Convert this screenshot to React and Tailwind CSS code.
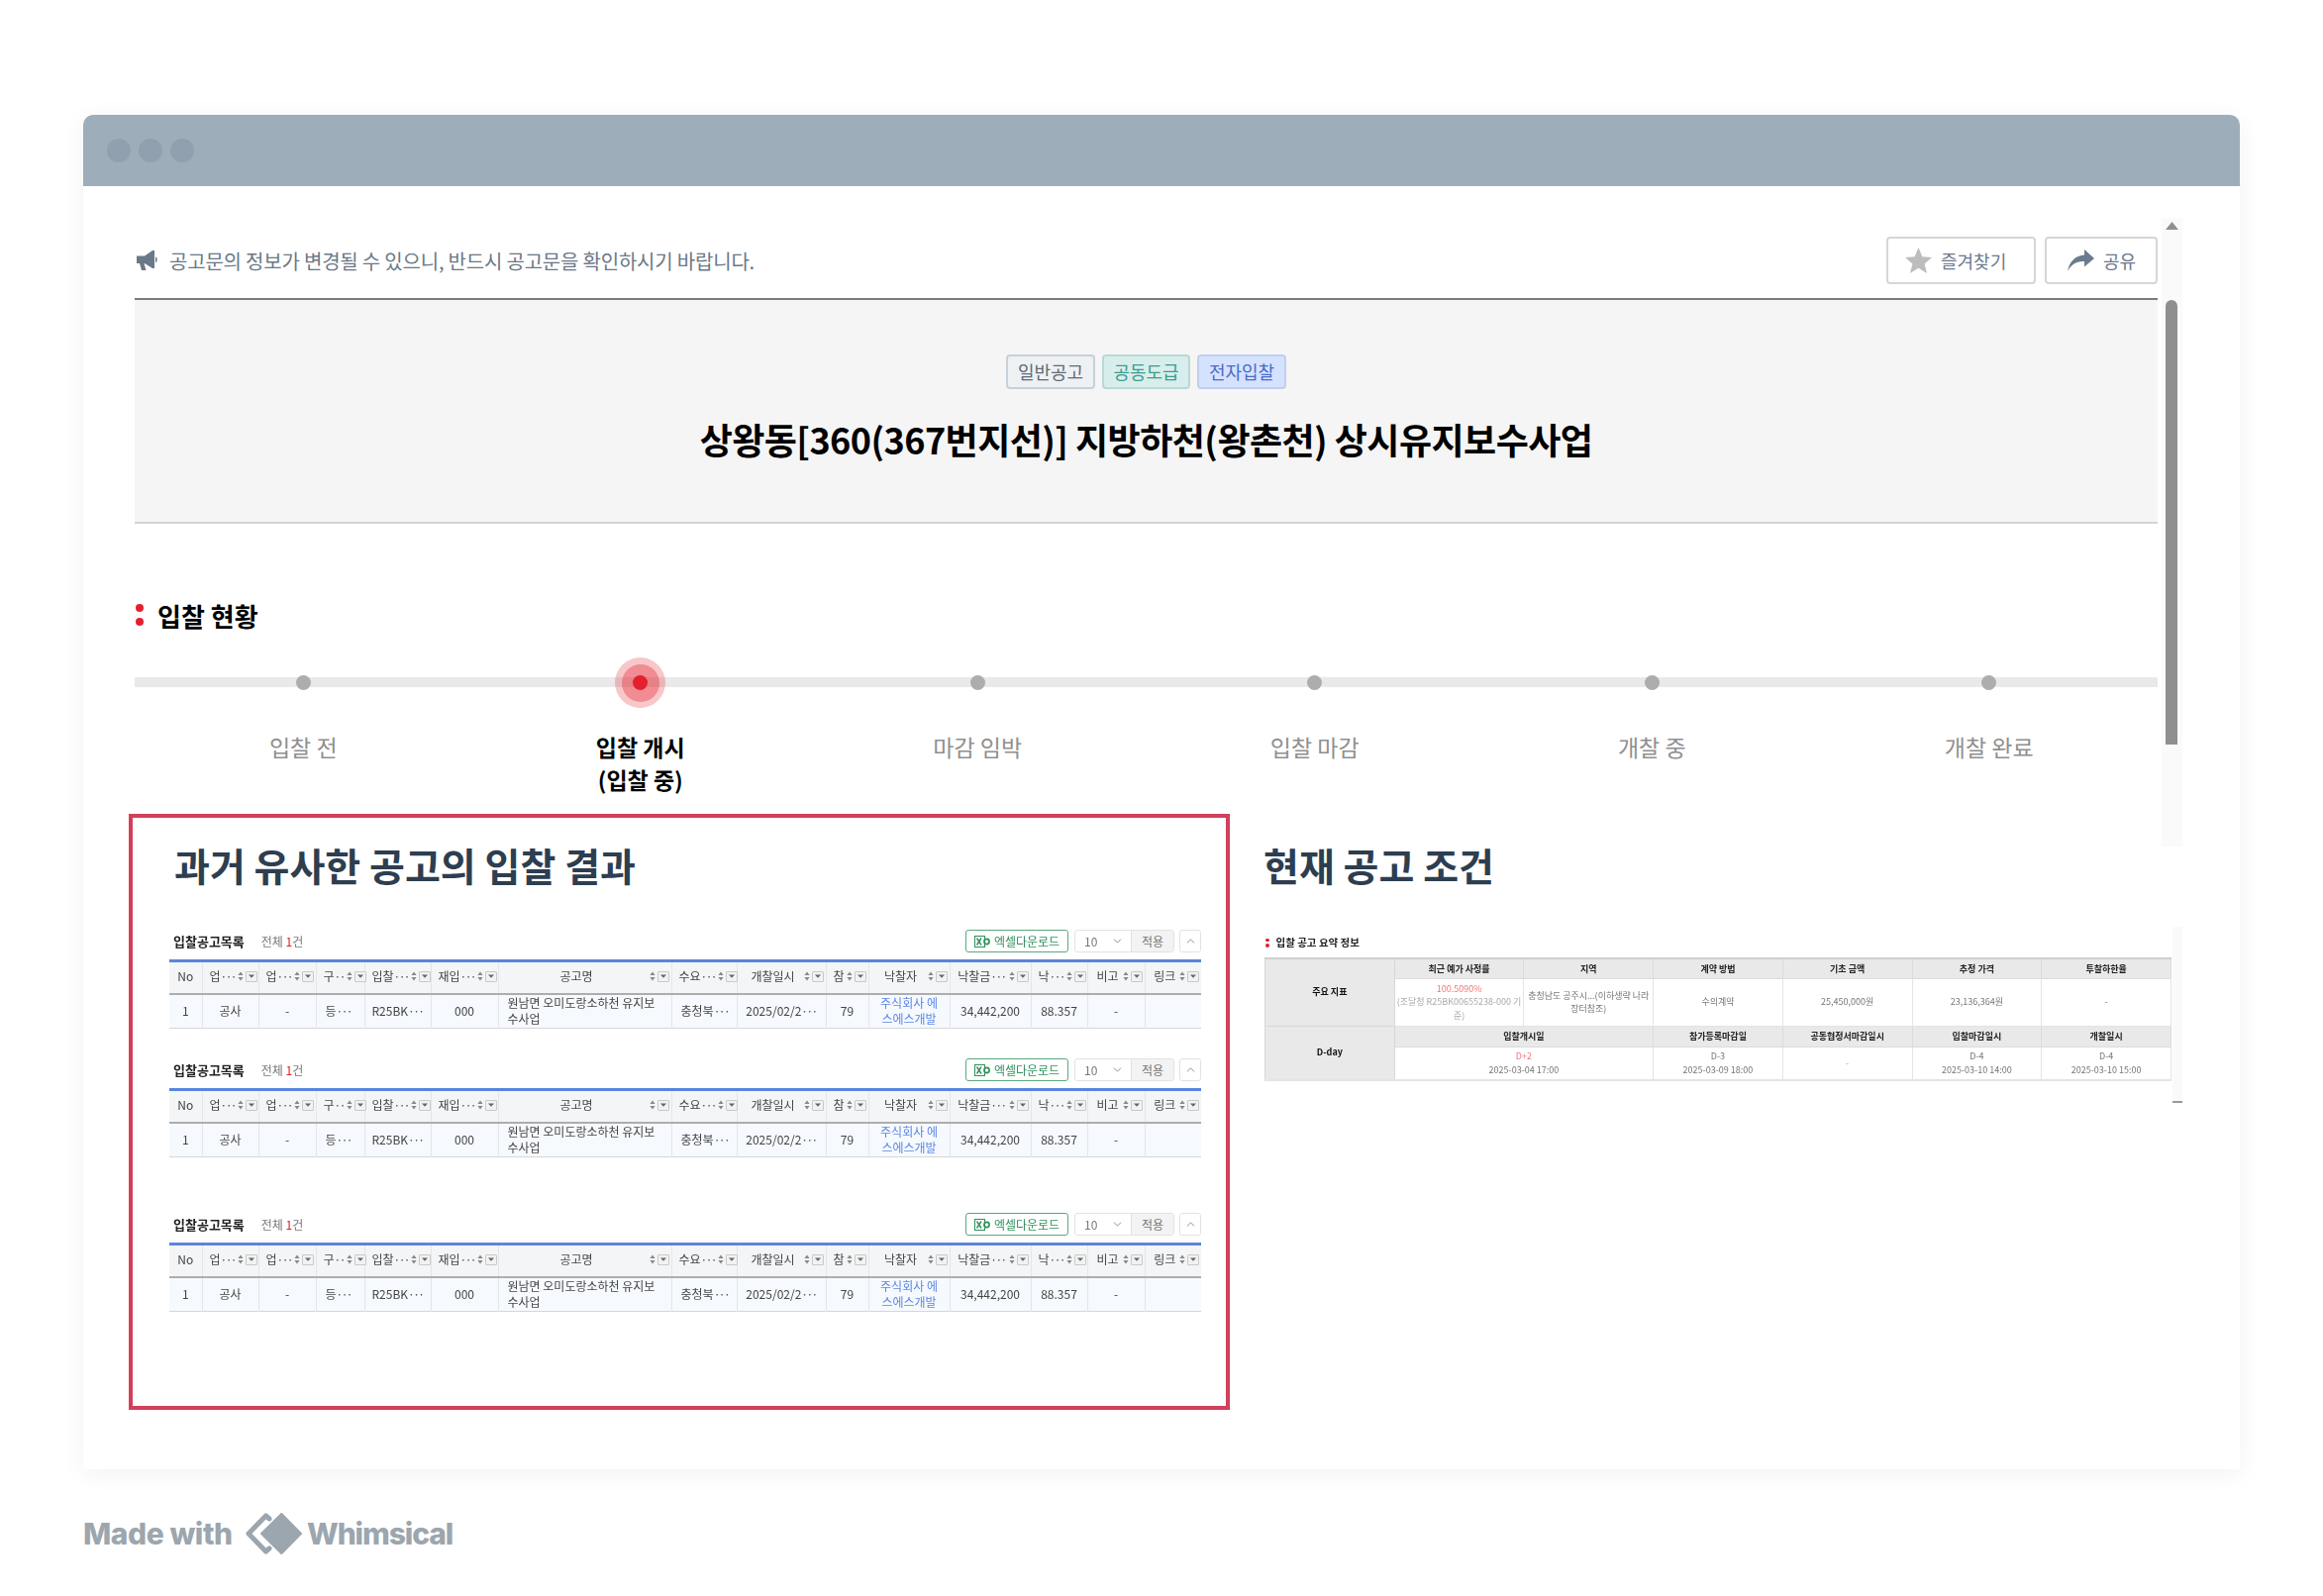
import { ChevronDown, ChevronUp } from "lucide-react";

const font = { fontFamily: "'Noto Sans CJK KR', 'Noto Sans', sans-serif" };

const steps = ["입찰 전", "입찰 개시", "마감 임박", "입찰 마감", "개찰 중", "개찰 완료"];

const columns = [
  { label: "No", w: "w-[33px]", plain: true },
  { label: "업", more: "···", w: "w-[57px]" },
  { label: "업", more: "···", w: "w-[58px]" },
  { label: "구", more: "··", w: "w-[49px]" },
  { label: "입찰", more: "···", w: "w-[67px]" },
  { label: "재입", more: "···", w: "w-[68px]" },
  { label: "공고명", w: "w-[175px]" },
  { label: "수요", more: "···", w: "w-[66px]" },
  { label: "개찰일시", w: "w-[90px]" },
  { label: "참", w: "w-[43px]" },
  { label: "낙찰자", w: "w-[82px]" },
  { label: "낙찰금", more: "···", w: "w-[82px]" },
  { label: "낙", more: "···", w: "w-[57px]" },
  { label: "비고", w: "w-[58px]" },
  { label: "링크", w: "w-[57px]" },
];

// 잘린 글자 표시: 점 간격을 좁혀서 씀
const Dots = ({ children = "···" }) => <span className="tracking-[-1.6px]">{children}</span>;

const SortIcon = () => (
  <svg width="6" height="10" viewBox="0 0 6 10" className="shrink-0">
    <path d="M3 0.5 L5.6 4 H0.4 Z M3 9.5 L0.4 6 H5.6 Z" fill="#888" />
  </svg>
);

const FilterBox = () => (
  <span className="flex h-[11px] w-[12px] shrink-0 items-center justify-center rounded-[1px] border border-[#c9c9c9] bg-[#f2f2f2]">
    <svg width="6" height="4" viewBox="0 0 6 4">
      <path d="M0 0.5 H6 L3 3.8 Z" fill="#666" />
    </svg>
  </span>
);

const ExcelIcon = () => (
  <svg width="16" height="12" viewBox="0 0 16 12" className="shrink-0">
    <rect x="0.5" y="0.5" width="10" height="11" fill="none" stroke="#2f8f5b" strokeWidth="1" />
    <path d="M2.5 2.5 L7 9.5 M7 2.5 L2.5 9.5" stroke="#2f8f5b" strokeWidth="1.4" />
    <circle cx="12.5" cy="6" r="2.6" fill="none" stroke="#2f8f5b" strokeWidth="1.6" />
  </svg>
);

// 입찰공고목록 표 한 벌
const BidTable = ({ className }) => (
  <div className={`w-[1042px] blur-[0.4px] ${className}`}>
    <div className="mb-[7px] flex h-[23px] items-center">
      <span className="ml-[4px] text-[13px] font-bold text-[#222]">입찰공고목록</span>
      <span className="ml-[17px] text-[12px] text-[#777]">
        전체 <span className="text-[#e02020]">1</span>건
      </span>
      <button className="ml-auto flex h-[23px] w-[104px] items-center justify-center gap-[4px] rounded-[3px] border border-[#5aa97a] text-[12px] text-[#2f8f5b]">
        <ExcelIcon />
        엑셀다운로드
      </button>
      <div className="ml-[6px] flex h-[23px] w-[101px] overflow-hidden rounded-[3px] border border-[#e2e2e2] text-[12px] text-[#777]">
        <span className="flex w-[57px] items-center justify-between border-r border-[#e2e2e2] pl-[9px] pr-[7px]">
          10
          <ChevronDown size={13} strokeWidth={1.5} />
        </span>
        <span className="flex flex-1 items-center justify-center bg-[#f3f3f3]">적용</span>
      </div>
      <span className="ml-[5px] flex h-[23px] w-[22px] items-center justify-center rounded-[3px] border border-[#e2e2e2] text-[#777]">
        <ChevronUp size={13} strokeWidth={1.5} />
      </span>
    </div>
    <table className="w-[1042px] table-fixed border-collapse border-t-[3px] border-[#5b84dc] text-[12px] text-[#444]">
      <colgroup>
        {columns.map((col, i) => (
          <col key={i} className={col.w} />
        ))}
      </colgroup>
      <thead>
        <tr className="h-[33px] border-b-[2px] border-[#adadad] bg-[#f4f5f6]">
          {columns.map((col, i) => (
            <th key={i} className="border-r border-[#e4e6e9] px-[2px] pb-[2px] font-normal last:border-r-0">
              {col.plain ? (
                col.label
              ) : (
                <span className="flex items-center gap-[2px]">
                  <span className="flex-1 whitespace-nowrap pl-[5px] text-center">
                    {col.label}
                    {col.more && <Dots>{col.more}</Dots>}
                  </span>
                  <SortIcon />
                  <FilterBox />
                </span>
              )}
            </th>
          ))}
        </tr>
      </thead>
      <tbody>
        <tr className="h-[35px] border-b border-[#d6d6d6] bg-[#f6f9fd] text-center leading-[16px]">
          <td className="border-r border-[#e4e6e9]">1</td>
          <td className="border-r border-[#e4e6e9]">공사</td>
          <td className="border-r border-[#e4e6e9]">-</td>
          <td className="border-r border-[#e4e6e9] pl-[9px] text-left">등<Dots /></td>
          <td className="border-r border-[#e4e6e9]">R25BK<Dots /></td>
          <td className="border-r border-[#e4e6e9]">000</td>
          <td className="border-r border-[#e4e6e9] px-[9px] text-left">원남면 오미도랑소하천 유지보수사업</td>
          <td className="border-r border-[#e4e6e9] pl-[9px] text-left">충청북<Dots /></td>
          <td className="border-r border-[#e4e6e9]">2025/02/2<Dots /></td>
          <td className="border-r border-[#e4e6e9]">79</td>
          <td className="border-r border-[#e4e6e9] px-[10px] text-[#5b86e8]">주식회사 에스에스개발</td>
          <td className="border-r border-[#e4e6e9]">34,442,200</td>
          <td className="border-r border-[#e4e6e9]">88.357</td>
          <td className="border-r border-[#e4e6e9]">-</td>
          <td></td>
        </tr>
      </tbody>
    </table>
  </div>
);

const summaryCols = ["최근 예가 사정률", "지역", "계약 방법", "기초 금액", "추정 가격", "투찰하한율"];

const SummaryTable = () => (
  <div className="ml-[1px] blur-[0.4px]">
    <div className="ml-[1px] flex h-[20px] items-center gap-[7px] text-[10.5px] font-bold text-[#222]">
      <span className="flex flex-col gap-[2px]">
        <i className="block size-[3.5px] rounded-full bg-[#e0202c]" />
        <i className="block size-[3.5px] rounded-full bg-[#e0202c]" />
      </span>
      입찰 공고 요약 정보
    </div>
    <table className="mt-[5px] w-[916px] table-fixed border-collapse border-t-2 border-r border-[#cfcfcf] text-center text-[9px] leading-[13.5px] text-[#777]">
      <tbody>
        <tr className="h-[20px] bg-[#e9e9e9] font-bold text-[#222]">
          <td rowSpan={2} className="border border-[#d8d8d8] pb-[1px] text-[#111]">
            주요 지표
          </td>
          {summaryCols.map((c) => (
            <td key={c} className="border border-[#dcdcdc]">
              {c}
            </td>
          ))}
        </tr>
        <tr className="h-[48px]">
          <td className="whitespace-nowrap border border-[#e4e4e4]">
            <span className="text-[#f27a7a]">100.5090%</span>
            <br />
            <span className="text-[#aaa]">
              (조달청 R25BK00655238-000 기
              <br />
              준)
            </span>
          </td>
          <td className="whitespace-nowrap border border-[#e4e4e4]">
            충청남도 공주시...(이하생략 나라
            <br />
            장터참조)
          </td>
          <td className="border border-[#e4e4e4]">수의계약</td>
          <td className="border border-[#e4e4e4]">25,450,000원</td>
          <td className="border border-[#e4e4e4]">23,136,364원</td>
          <td className="border border-[#e4e4e4]">-</td>
        </tr>
        <tr className="h-[21px] bg-[#e9e9e9] font-bold text-[#222]">
          <td rowSpan={2} className="border border-[#d8d8d8] pb-[1px] text-[#111]">
            D-day
          </td>
          <td colSpan={2} className="border border-[#dcdcdc]">입찰개시일</td>
          <td className="border border-[#dcdcdc]">참가등록마감일</td>
          <td className="border border-[#dcdcdc]">공동협정서마감일시</td>
          <td className="border border-[#dcdcdc]">입찰마감일시</td>
          <td className="border border-[#dcdcdc]">개찰일시</td>
        </tr>
        <tr className="h-[34px] border-b-2 border-[#e4e4e4]">
          <td colSpan={2} className="border border-[#e4e4e4]">
            <span className="text-[#f27a7a]">D+2</span>
            <br />
            2025-03-04 17:00
          </td>
          <td className="border border-[#e4e4e4]">
            D-3
            <br />
            2025-03-09 18:00
          </td>
          <td className="border border-[#e4e4e4] text-[#aaa]">-</td>
          <td className="border border-[#e4e4e4]">
            D-4
            <br />
            2025-03-10 14:00
          </td>
          <td className="border border-[#e4e4e4]">
            D-4
            <br />
            2025-03-10 15:00
          </td>
        </tr>
      </tbody>
    </table>
  </div>
);

const WhimsicalLogo = () => (
  <svg width="57" height="42" viewBox="0 0 57 42" className="shrink-0">
    <path d="M36.3 1 L56 21 L36.3 41 L16 21 Z" fill="#9ca6ae" stroke="#9ca6ae" strokeWidth="2" strokeLinejoin="round" />
    <path d="M24 6 L20.5 3 L3 21 L20.5 39 L24 36" fill="none" stroke="#9ca6ae" strokeWidth="5" strokeLinejoin="round" strokeLinecap="round" />
  </svg>
);

export default function App() {
  return (
    <div className="min-h-[1612px] w-[2346px] bg-white pl-[84px] pt-[116px]" style={font}>
      {/* Window */}
      <div className="relative h-[1368px] w-[2178px] rounded-t-[10px] bg-white shadow-[0_4px_24px_rgba(0,0,0,0.06)]">
        <div className="flex h-[72px] items-center gap-[8px] rounded-t-[10px] bg-[#9eadba] pl-[24px]">
          <span className="size-[24px] rounded-full bg-[#90a0ae]" />
          <span className="size-[24px] rounded-full bg-[#90a0ae]" />
          <span className="size-[24px] rounded-full bg-[#90a0ae]" />
        </div>

        {/* Scrollbars */}
        <div className="absolute left-[2099px] top-[104px] flex h-[635px] w-[21px] flex-col items-center bg-[#fafafa] pr-[1px]">
          <svg width="13" height="8" viewBox="0 0 13 8" className="mt-[4px]">
            <path d="M6.5 0 L13 8 H0 Z" fill="#8f8f8f" />
          </svg>
          <div className="mt-[71px] h-[449px] w-[12px] rounded-t-full bg-[#8f8f8f]" />
        </div>
        <div className="absolute left-[2110px] top-[820px] flex h-[178px] w-[10px] items-end bg-[#fafafa]">
          <span className="h-[2px] w-[10px] bg-[#999]" />
        </div>

        <div className="ml-[52px] w-[2043px]">
          {/* Notice + actions */}
          <div className="mb-[14px] mt-[51px] flex h-[48px] items-center">
            <svg width="23" height="20" viewBox="0 0 23 20" className="ml-[2px] shrink-0">
              <path d="M0 5.5 H8 L16 0 H18 V18 H16 L8 13 H7.5 L9.5 20 H5 L3 13 H0 Z M19 6 Q22.5 9 19 12.5 Z" fill="#6b7888" />
            </svg>
            <span className="ml-[10px] pt-[1px] text-[20px] tracking-[-0.2px] text-[#6a7887]">
              공고문의 정보가 변경될 수 있으니, 반드시 공고문을 확인하시기 바랍니다.
            </span>
            <button className="ml-auto flex h-[48px] w-[151px] items-center gap-[9px] rounded-[4px] border-2 border-[#d6d6d6] pl-[17px] text-[18px] text-[#6b7a8f]">
              <svg width="27" height="26" viewBox="0 0 27 26" className="shrink-0">
                <polygon points="13.5,0 17.3,9.2 27,10 19.6,16.4 22,26 13.5,20.8 5,26 7.4,16.4 0,10 9.7,9.2" fill="#bdbdbd" />
              </svg>
              즐겨찾기
            </button>
            <button className="ml-[9px] flex h-[48px] w-[114px] items-center gap-[9px] rounded-[4px] border-2 border-[#d6d6d6] pl-[21px] text-[18px] text-[#6b7a8f]">
              <svg width="27" height="22" viewBox="0 0 27 22" className="shrink-0">
                <path d="M0 22 C2 12 8 6 17 5.5 V0 L27 9 L17 17.5 V12 C9 11.5 4 15 0 22 Z" fill="#6b7a8f" />
              </svg>
              공유
            </button>
          </div>

          {/* Title panel */}
          <div className="flex h-[228px] flex-col items-center border-b-2 border-t-2 border-b-[#d4d4d4] border-t-[#7a7a7a] bg-[#f5f5f5] pt-[55px]">
            <div className="flex gap-[7px] text-[18px]">
              <span className="flex h-[35px] w-[90px] items-center justify-center rounded-[4px] border-2 border-[#c8d0d8] bg-[#eef1f4] text-[#5f6b78]">일반공고</span>
              <span className="flex h-[35px] w-[89px] items-center justify-center rounded-[4px] border-2 border-[#b8d8d6] bg-[#d8eeec] text-[#3a9d90]">공동도급</span>
              <span className="flex h-[35px] w-[90px] items-center justify-center rounded-[4px] border-2 border-[#c0cfee] bg-[#d5e2fd] text-[#4a6bc8]">전자입찰</span>
            </div>
            <h1 className="mt-[25px] text-[36px] font-bold leading-[50px] tracking-[-0.55px] text-black">
              상왕동[360(367번지선)] 지방하천(왕촌천) 상시유지보수사업
            </h1>
          </div>

          {/* Bid status */}
          <div className="mt-[74px] flex h-[36px] items-center gap-[14px] text-[26px] font-bold text-black">
            <span className="ml-[1px] flex flex-col gap-[6px]">
              <i className="block size-[8px] rounded-full bg-[#e3202c]" />
              <i className="block size-[8px] rounded-full bg-[#e3202c]" />
            </span>
            입찰 현황
          </div>

          <div className="relative mt-[25px] grid h-[51px] grid-cols-6">
            <div className="absolute inset-x-0 top-[20px] h-[10px] bg-[#e9e9e9]" />
            {steps.map((s, i) => (
              <div key={s} className="relative flex items-center justify-center">
                {i === 1 ? (
                  <span className="flex size-[51px] items-center justify-center rounded-full bg-[#e3202c]/25">
                    <span className="flex size-[38px] items-center justify-center rounded-full bg-[#e3202c]/35">
                      <span className="size-[15px] rounded-full bg-[#e3202c]" />
                    </span>
                  </span>
                ) : (
                  <span className="size-[15px] rounded-full bg-[#adadad]" />
                )}
              </div>
            ))}
          </div>

          <div className="mt-[23px] grid h-[68px] grid-cols-6 text-center text-[23px] leading-[33px] text-[#8f8f8f]">
            {steps.map((s, i) =>
              i === 1 ? (
                <div key={s} className="font-semibold text-black">
                  {s}
                  <br />
                  (입찰 중)
                </div>
              ) : (
                <div key={s}>{s}</div>
              )
            )}
          </div>

          {/* Comparison */}
          <div className="-ml-[6px] mt-[16px] flex w-[2063px] gap-[34px]">
            <div className="h-[602px] w-[1112px] shrink-0 border-4 border-[#d2405a] pl-[37px] pt-[21px]">
              <h2 className="pl-[5px] text-[39px] font-semibold leading-[52px] text-[#2d3e50]">과거 유사한 공고의 입찰 결과</h2>
              <BidTable className="mt-[40px]" />
              <BidTable className="mt-[30px]" />
              <BidTable className="mt-[56px]" />
            </div>
            <div className="pt-[25px]">
              <h2 className="text-[39px] font-semibold leading-[52px] text-[#2d3e50]">현재 공고 조건</h2>
              <div className="mt-[43px]">
                <SummaryTable />
              </div>
            </div>
          </div>
        </div>
      </div>

      {/* Footer */}
      <div className="mt-[44px] flex items-center text-[30px] font-extrabold leading-[42px] text-[#9ca6ae]" style={{ fontFamily: "Inter, sans-serif" }}>
        <span className="w-[164px] tracking-[-0.45px]">Made with</span>
        <WhimsicalLogo />
        <span className="ml-[5px] tracking-[-1.1px]">Whimsical</span>
      </div>
    </div>
  );
}
